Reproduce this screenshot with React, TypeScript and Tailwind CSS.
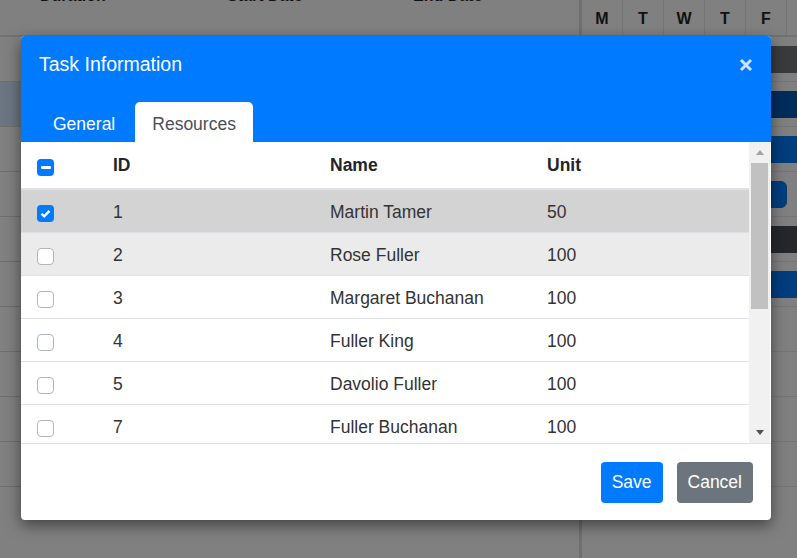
import React from "react";

type Resource = { id: number; name: string; unit: number; checked: boolean };

const resources: Resource[] = [
  { id: 1, name: "Martin Tamer", unit: 50, checked: true },
  { id: 2, name: "Rose Fuller", unit: 100, checked: false },
  { id: 3, name: "Margaret Buchanan", unit: 100, checked: false },
  { id: 4, name: "Fuller King", unit: 100, checked: false },
  { id: 5, name: "Davolio Fuller", unit: 100, checked: false },
  { id: 7, name: "Fuller Buchanan", unit: 100, checked: false },
];

const days = ["M", "T", "W", "T", "F"];

// chart bars seen to the right of the dialog, one per grid row
const bars = [
  "bg-[#393b3d] border-l-[5px] border-[#2a2b2c]",
  "bg-[#002d5c] border-l-[4px] border-[#0a2540]",
  "bg-[#003e7e]",
  "bg-[#003f80] rounded-[6px] border border-[#0d3a66] mr-[10px]",
  "bg-[#25282b]",
  "bg-[#003e7e]",
  "",
  "",
  "",
  "",
];

function Background() {
  return (
    <div className="flex h-full w-full">
      <div className="w-[579px] flex flex-col">
        <div className="h-[37px] border-b-2 border-[#727272] flex text-[16px] font-bold text-[#111] leading-none">
          <span className="ml-[40px] -mt-[12px] w-[187px]">Duration</span>
          <span className="-mt-[12px] w-[186px]">Start Date</span>
          <span className="-mt-[12px]">End Date</span>
        </div>
        {bars.map((_, i) => (
          <div
            key={i}
            className={`h-[45px] border-b border-[#6e6e6e] ${i === 1 ? "bg-[#6b7682]" : ""}`}
          />
        ))}
      </div>
      <div className="w-[3px] bg-[#6f6f6f]" />
      <div className="flex-1 flex flex-col">
        <div className="h-[37px] border-b-2 border-[#727272] flex">
          {days.map((d, i) => (
            <div
              key={i}
              className="w-[41px] border-r border-[#747474] flex items-center justify-center text-[16px] font-bold text-[#111] pt-[2px]"
            >
              {d}
            </div>
          ))}
        </div>
        {bars.map((cls, i) => (
          <div key={i} className="h-[45px] border-b border-[#767676] flex items-center pl-[180px]">
            {cls && <div className={`h-[27px] flex-1 ${cls}`} />}
          </div>
        ))}
      </div>
    </div>
  );
}

function CheckBox({ state }: { state: "on" | "off" | "mixed" }) {
  if (state === "off") {
    return <div className="w-[17px] h-[17px] rounded-[4px] border border-[#adb5bd] bg-white mt-[5px]" />;
  }
  return (
    <div className="w-[17px] h-[17px] rounded-[4px] bg-[#007bff] flex items-center justify-center mt-[5px]">
      {state === "mixed" ? (
        <div className="w-[10px] h-[3px] bg-white rounded-[1px]" />
      ) : (
        <svg width="11" height="9" viewBox="0 0 11 9">
          <path d="M1.5 4.8 L4.2 7.3 L9.5 1.8" fill="none" stroke="white" strokeWidth="2.4" />
        </svg>
      )}
    </div>
  );
}

function ResourceTable() {
  return (
    <div className="flex h-[301px]">
      <div className="w-[728px] overflow-hidden">
        <div className="grid grid-cols-[77px_217px_217px_1fr] h-[48px] border-b-2 border-[#dee2e6] items-center font-bold text-[#212529]">
          <div className="pl-[16px] flex items-center">
            <CheckBox state="mixed" />
          </div>
          <div className="pl-[15px] pt-[1px]">ID</div>
          <div className="pl-[15px] pt-[1px]">Name</div>
          <div className="pl-[15px] pt-[1px]">Unit</div>
        </div>
        {resources.map((r, i) => (
          <div
            key={r.id}
            className={`grid grid-cols-[77px_217px_217px_1fr] h-[43px] border-b border-[#dee2e6] items-center text-[#333] ${
              i === 0 ? "bg-[#d3d3d3]" : i === 1 ? "bg-[#ebebeb]" : "bg-white"
            }`}
          >
            <div className="pl-[16px] flex items-center">
              <CheckBox state={r.checked ? "on" : "off"} />
            </div>
            <div className="pl-[15px] pt-[2px]">{r.id}</div>
            <div className="pl-[15px] pt-[2px]">{r.name}</div>
            <div className="pl-[15px] pt-[2px]">{r.unit}</div>
          </div>
        ))}
      </div>
      <div className="w-[21px] bg-[#f1f1f1] flex flex-col">
        <div className="h-[21px] flex items-center justify-center">
          <svg width="8" height="5" viewBox="0 0 8 5">
            <path d="M0 5 L4 0 L8 5 Z" fill="#a3a3a3" />
          </svg>
        </div>
        <div className="h-[146px] mx-[2px] bg-[#c1c1c1]" />
        <div className="flex-1" />
        <div className="h-[21px] flex items-center justify-center">
          <svg width="8" height="5" viewBox="0 0 8 5">
            <path d="M0 0 L8 0 L4 5 Z" fill="#505050" />
          </svg>
        </div>
      </div>
    </div>
  );
}

function TaskDialog() {
  return (
    <div className="absolute left-[21px] top-[36px] w-[750px] h-[484px] bg-white rounded-[4px] overflow-hidden shadow-[0_5px_15px_rgba(0,0,0,0.5)] flex flex-col text-[17.5px]">
      <div className="h-[106px] bg-[#007bff] flex flex-col">
        <div className="h-[56px] flex items-center justify-between pl-[18px] pr-[18px] pt-[2px]">
          <span className="text-white text-[19.5px]">Task Information</span>
          <svg width="14" height="14" viewBox="0 0 14 14" className="opacity-80">
            <path d="M2 2 L12 12 M12 2 L2 12" stroke="white" strokeWidth="3" />
          </svg>
        </div>
        <div className="mt-auto flex gap-[3px] pl-[15px] h-[40px]">
          <div className="px-[17px] pt-[4px] flex items-center text-white">General</div>
          <div className="px-[17px] pt-[4px] flex items-center bg-white text-[#495057] rounded-t-[5px]">Resources</div>
        </div>
      </div>
      <ResourceTable />
      <div className="flex-1 border-t border-[#dee2e6] flex items-center justify-end gap-[14px] pr-[18px]">
        <button className="h-[41px] px-[11px] rounded-[4px] bg-[#007bff] text-white">Save</button>
        <button className="h-[41px] px-[11px] rounded-[4px] bg-[#6c757d] text-white">Cancel</button>
      </div>
    </div>
  );
}

export default function App() {
  return (
    <div className="relative w-[797px] h-[558px] overflow-hidden bg-[#808080] font-['Liberation_Sans',Arial,sans-serif]">
      <Background />
      <TaskDialog />
    </div>
  );
}
